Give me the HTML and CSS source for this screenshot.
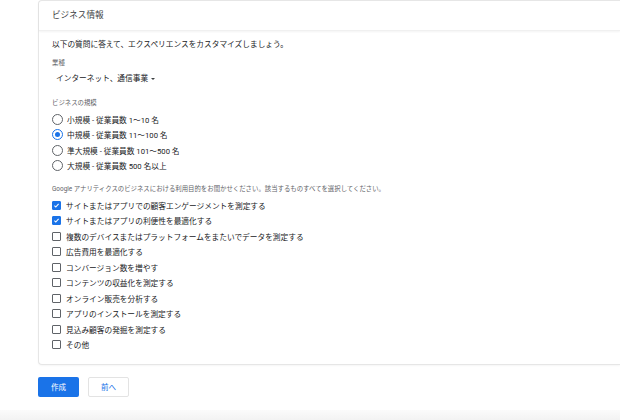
FILE: index.html
```
<!DOCTYPE html>
<html lang="ja">
<head>
    <meta charset="UTF-8">
    <meta name="viewport" content="width=device-width, initial-scale=1.0">
    <title>ビジネス情報</title>
    <link rel="stylesheet" href="styles.css">
</head>
<body>
    <div class="page">
        <div class="card">
            <div class="card-header">ビジネス情報</div>
            <div class="card-body">
                <div class="intro">以下の質問に答えて、エクスペリエンスをカスタマイズしましょう。</div>

                <div class="field-label industry-label">業種</div>
                <div class="select">インターネット、通信事業<span class="caret"></span></div>

                <div class="field-label size-label">ビジネスの規模</div>
                <div class="radio-group">
                    <div class="option"><span class="radio"></span>小規模 - 従業員数 1〜10 名</div>
                    <div class="option"><span class="radio checked"></span>中規模 - 従業員数 11〜100 名</div>
                    <div class="option"><span class="radio"></span>準大規模 - 従業員数 101〜500 名</div>
                    <div class="option"><span class="radio"></span>大規模 - 従業員数 500 名以上</div>
                </div>

                <div class="field-label purpose-label">Google アナリティクスのビジネスにおける利用目的をお聞かせください。該当するものすべてを選択してください。</div>
                <div class="check-group">
                    <div class="option"><span class="checkbox checked"><svg viewBox="0 0 10 10"><path d="M2 5.2l2 2 4-4.4"/></svg></span>サイトまたはアプリでの顧客エンゲージメントを測定する</div>
                    <div class="option"><span class="checkbox checked"><svg viewBox="0 0 10 10"><path d="M2 5.2l2 2 4-4.4"/></svg></span>サイトまたはアプリの利便性を最適化する</div>
                    <div class="option"><span class="checkbox"></span>複数のデバイスまたはプラットフォームをまたいでデータを測定する</div>
                    <div class="option"><span class="checkbox"></span>広告費用を最適化する</div>
                    <div class="option"><span class="checkbox"></span>コンバージョン数を増やす</div>
                    <div class="option"><span class="checkbox"></span>コンテンツの収益化を測定する</div>
                    <div class="option"><span class="checkbox"></span>オンライン販売を分析する</div>
                    <div class="option"><span class="checkbox"></span>アプリのインストールを測定する</div>
                    <div class="option"><span class="checkbox"></span>見込み顧客の発掘を測定する</div>
                    <div class="option"><span class="checkbox"></span>その他</div>
                </div>
            </div>
        </div>

        <div class="actions">
            <button class="btn btn-primary">作成</button>
            <button class="btn btn-secondary">前へ</button>
        </div>
    </div>
    <div class="footer-band"></div>
</body>
</html>
```

FILE: styles.css
```
body {
    margin: 0;
    background: #ffffff;
    font-family: Roboto, "Noto Sans CJK JP", sans-serif;
    color: #202124;
    overflow: hidden;
    height: 420px;
}
.page {
    padding-left: 38px;
}
/* the card runs on past the right edge, so it has no right border */
.card {
    border: 1px solid #e6e6e6;
    border-right: none;
    border-radius: 4px 0 0 4px;
    box-shadow: 0 1px 2px rgba(0, 0, 0, 0.04);
    background: #fff;
}
.card-header {
    height: 29px;
    line-height: 29px;
    padding-left: 13px;
    font-size: 8.6px;
    color: #3c4043;
    border-bottom: 1px solid #f0f0f0;
    box-shadow: 0 1px 2px rgba(0, 0, 0, 0.05);
}
.card-body {
    padding: 8px 13px 11.5px;
}
.intro {
    font-size: 7.7px;
    line-height: 12px;
}
.field-label {
    font-size: 6.4px;
    line-height: 10px;
    color: #5f6368;
}
.industry-label {
    margin-top: 7px;
}
.select {
    margin-top: 5px;
    padding-left: 4px;
    font-size: 7.7px;
    line-height: 12px;
    display: flex;
    align-items: center;
}
.caret {
    margin-left: 3px;
    width: 0;
    height: 0;
    border-left: 2.5px solid transparent;
    border-right: 2.5px solid transparent;
    border-top: 2.5px solid #3c4043;
}
.size-label {
    margin-top: 13px;
}
.radio-group {
    margin-top: 3.25px;
}
.purpose-label {
    margin-top: 10.75px;
}
.check-group {
    margin-top: 3.25px;
}
.option {
    height: 15.5px;
    display: flex;
    align-items: center;
    font-size: 7.7px;
}
.radio {
    box-sizing: border-box;
    width: 11px;
    height: 11px;
    border: 1.3px solid #5f6368;
    border-radius: 50%;
    margin-right: 4px;
    display: flex;
    align-items: center;
    justify-content: center;
}
.radio.checked {
    border-color: #1a73e8;
}
.radio.checked::after {
    content: "";
    width: 5px;
    height: 5px;
    border-radius: 50%;
    background: #1a73e8;
}
.checkbox {
    box-sizing: border-box;
    width: 9px;
    height: 9px;
    border: 1.2px solid #5f6368;
    border-radius: 1px;
    margin-right: 5px;
    display: flex;
}
.checkbox.checked {
    background: #1a73e8;
    border-color: #1a73e8;
}
.checkbox svg {
    width: 100%;
    height: 100%;
    fill: none;
    stroke: #fff;
    stroke-width: 1.6;
}
.actions {
    margin-top: 12px;
    display: flex;
    gap: 9px;
}
.btn {
    height: 20px;
    border-radius: 2px;
    font-family: Roboto, "Noto Sans CJK JP", sans-serif;
    font-size: 7.5px;
    padding: 0;
    cursor: pointer;
}
.btn-primary {
    width: 41px;
    background: #1a73e8;
    color: #fff;
    border: none;
}
.btn-secondary {
    width: 41px;
    background: #fff;
    color: #1a73e8;
    border: 1px solid #e3e3e3;
}
.footer-band {
    margin-top: 13px;
    height: 12px;
    background: linear-gradient(#fbfbfb, #f1f1f1);
}
```
